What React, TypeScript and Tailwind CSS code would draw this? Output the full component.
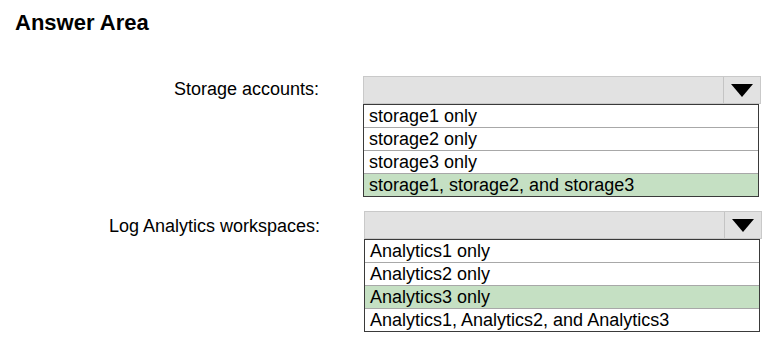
import React from "react";

function Dropdown({ options, selected }: { options: string[]; selected: number }) {
  return (
    <div className="w-[398px]">
      <div className="flex h-[28px] border border-[#c9c9c9] bg-[#e2e2e2]">
        <div className="flex-1" />
        <div className="flex w-[37px] items-center justify-center border-l border-[#c4c4c4]">
          <svg width="22" height="13" viewBox="0 0 22 13">
            <polygon points="0,0 22,0 11,13" fill="#000" />
          </svg>
        </div>
      </div>
      <div className="mr-[2px] border border-[#3a3a3a] bg-white">
        {options.map((o, i) => (
          <div
            key={o}
            className={
              "pl-[5px] text-[18px] leading-[22px] " +
              (i > 0 ? "h-[23px] border-t border-[#a8a8a8] " : "h-[22px] ") +
              (i === selected ? "bg-[#c5e0c3]" : "bg-white")
            }
          >
            {o}
          </div>
        ))}
      </div>
    </div>
  );
}

export default function App() {
  return (
    <div className="h-[345px] w-[781px] bg-white font-['Liberation_Sans',Arial,sans-serif] text-black">
      <h1 className="pl-[15px] pt-[10px] text-[22px] font-bold leading-[26px]">Answer Area</h1>
      <div className="mt-[40px] flex flex-col gap-[14px]">
        <div className="flex">
          <div className="w-[319px] text-right text-[18px] leading-[26px]">Storage accounts:</div>
          <div className="ml-[44px]">
            <Dropdown
              options={["storage1 only", "storage2 only", "storage3 only", "storage1, storage2, and storage3"]}
              selected={3}
            />
          </div>
        </div>
        <div className="flex">
          <div className="w-[320px] text-right text-[18px] leading-[30px]">Log Analytics workspaces:</div>
          <div className="ml-[44px]">
            <Dropdown
              options={["Analytics1 only", "Analytics2 only", "Analytics3 only", "Analytics1, Analytics2, and Analytics3"]}
              selected={2}
            />
          </div>
        </div>
      </div>
    </div>
  );
}
